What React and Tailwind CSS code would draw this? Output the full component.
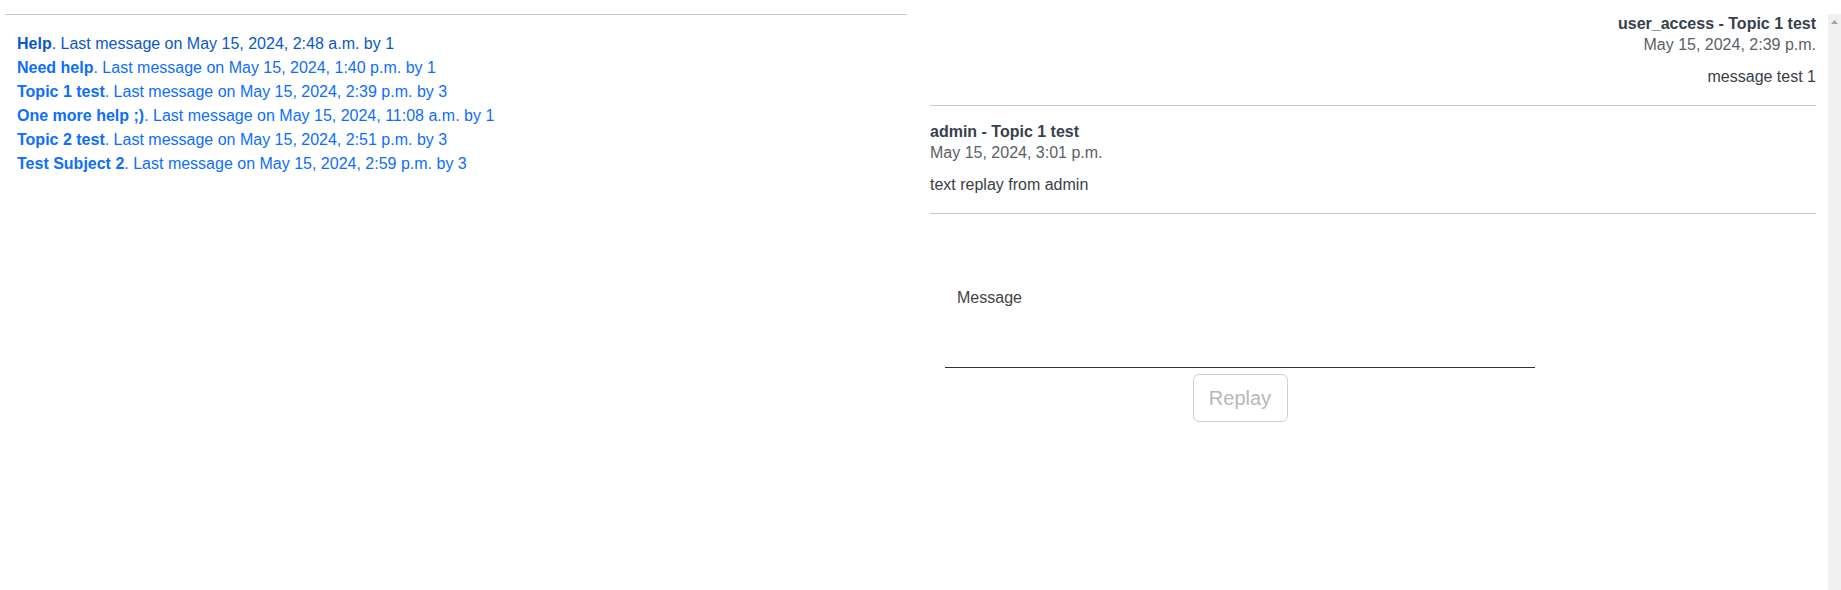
import React from 'react';

const topics = [
  { title: 'Help', date: 'May 15, 2024, 2:48 a.m.', by: 1, active: true },
  { title: 'Need help', date: 'May 15, 2024, 1:40 p.m.', by: 1 },
  { title: 'Topic 1 test', date: 'May 15, 2024, 2:39 p.m.', by: 3 },
  { title: 'One more help ;)', date: 'May 15, 2024, 11:08 a.m.', by: 1 },
  { title: 'Topic 2 test', date: 'May 15, 2024, 2:51 p.m.', by: 3 },
  { title: 'Test Subject 2', date: 'May 15, 2024, 2:59 p.m.', by: 3 },
];

const messages = [
  { author: 'user_access', topic: 'Topic 1 test', date: 'May 15, 2024, 2:39 p.m.', text: 'message test 1', mine: true },
  { author: 'admin', topic: 'Topic 1 test', date: 'May 15, 2024, 3:01 p.m.', text: 'text replay from admin' },
];

const TopicList = () => (
  <div className="w-[907px] shrink-0 pl-[5px]">
    <hr className="mt-[14px] border-0 border-t border-[#c8c9ca]" />
    <ul className="pl-[12px] pt-[17px]">
      {topics.map((t) => (
        <li key={t.title} className="leading-6">
          <a href="#" className={t.active ? 'text-[#0a58ca]' : 'text-[#0d6efd]'}>
            <span className="font-bold">{t.title}</span>. Last message on {t.date} by {t.by}
          </a>
        </li>
      ))}
    </ul>
  </div>
);

const Message = ({ m }) => (
  <div className={m.mine ? 'text-right' : 'text-left'}>
    <h6 className="font-bold leading-[1.2] text-[#37414b]">
      {m.author} - {m.topic}
    </h6>
    <p className="leading-6 text-[#5c6166]">{m.date}</p>
    <p className="mt-2 leading-6 text-[#3a4047]">{m.text}</p>
    <hr className="my-4 border-0 border-t border-[#c8c9ca]" />
  </div>
);

const ReplyForm = () => (
  <form className="ml-[15px] w-[590px] mt-[59px]" onSubmit={(e) => e.preventDefault()}>
    <div className="h-[95px] border-b border-[#333] pl-3 pt-[13px]">
      <label className="block leading-6 text-[#444]">Message</label>
      <textarea className="w-full h-[40px] resize-none bg-transparent outline-none" rows={1} />
    </div>
    <div className="flex justify-center mt-[6px]">
      <button
        type="submit"
        disabled
        className="h-12 w-[95px] rounded-md border border-[#cfcfcf] text-[20px] leading-[1.5] text-[#b8b8b8]"
      >
        Replay
      </button>
    </div>
  </form>
);

const ScrollTrack = () => (
  <div className="w-[13px] shrink-0 bg-[#f1f1f1] flex justify-center pt-[6px]">
    <svg width="7" height="4" viewBox="0 0 7 4" className="block">
      <path d="M3.5 0 L7 4 L0 4 Z" fill="#a3a3a3" />
    </svg>
  </div>
);

export default function App() {
  return (
    <div className="flex h-[590px] overflow-hidden bg-white text-base font-['Liberation_Sans',Arial,sans-serif]">
      <TopicList />
      <div className="mt-[14px] h-[576px] flex flex-1">
        <div className="flex-1 pl-[23px] pr-[12px]">
          {messages.map((m, i) => (
            <Message key={i} m={m} />
          ))}
          <ReplyForm />
        </div>
        <ScrollTrack />
      </div>
    </div>
  );
}
